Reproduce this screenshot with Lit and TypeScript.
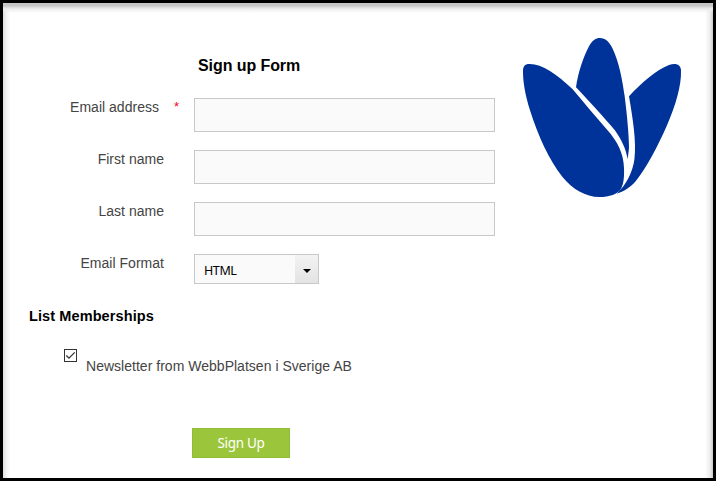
import { LitElement, html, css } from "lit";
import { customElement, property } from "lit/decorators.js";

@customElement("form-row")
class FormRow extends LitElement {
  @property() label = "";
  @property({ type: Boolean }) required = false;
  static styles = css`
    :host { display: flex; height: 52px; }
    .label { box-sizing: border-box; width: 191px; padding-right: 30px; display: flex; justify-content: flex-end; font-size: 14px; line-height: 18px; color: #444; white-space: nowrap; letter-spacing: 0.02px; }
    .star { color: #ff0018; font-size: 13px; width: 5px; margin-left: 15px; }
    .req { padding-right: 15px; }
  `;
  render() {
    return html`<div class="label ${this.required ? "req" : ""}">
        <span>${this.label}</span>${this.required ? html`<span class="star">*</span>` : ""}
      </div><slot></slot>`;
  }
}

@customElement("flower-logo")
class FlowerLogo extends LitElement {
  static styles = css`
    :host { display: block; width: 190px; height: 185px; }
    svg { display: block; width: 100%; height: 100%; fill: #003399; }
  `;
  render() {
    return html`<svg viewBox="0 0 570 555">
      <path d="M39 140C39 124 44 117 58 117C94 116 141 147 188 193C220 232 256 273 290 313C323 350 341 386 342 429C343 456 341 477 333 491C324 507 298 516 268 516C226 515 188 493 157 455C118 407 84 332 60 256C46 210 39 171 39 140Z"/>
      <path d="M198 187C204 145 219 98 237 64C247 46 257 39 270 39C286 39 298 51 308 71C327 111 337 164 344 214C351 268 357 333 357 370L353 403C348 371 334 343 314 315C282 277 237 229 198 187Z"/>
      <path d="M357 214C394 174 439 134 477 120C496 113 512 117 513 136C515 181 496 244 471 301C442 367 410 428 377 469C361 487 341 501 320 506C350 478 368 440 373 404C380 350 368 280 357 214Z"/>
    </svg>`;
  }
}

@customElement("app-root")
class AppRoot extends LitElement {
  static styles = css`
    :host { display: block; box-sizing: border-box; width: 716px; height: 481px; border: 3px solid #000; overflow: hidden; position: relative; font-family: "Liberation Sans", Arial, sans-serif; color: #444;
      background:
        linear-gradient(#c6c6c6 0 3px, #d9d9d9 4px, #eeeeee 6px, rgba(255,255,255,0) 10px) top / 100% 10px no-repeat,
        linear-gradient(90deg, #dedede, #f2f2f2 3px, #fff 7px) left / 7px 100% no-repeat,
        linear-gradient(270deg, #cacaca, #ededed 3px, #fff 8px) right / 8px 100% no-repeat,
        #fff; }
    flower-logo { position: absolute; left: 507px; top: 22px; }
    h1 { margin: 0; padding: 54px 0 0 195px; font-size: 16px; line-height: 18px; height: 23px; color: #000; white-space: nowrap; letter-spacing: -0.08px; }
    .input { box-sizing: border-box; width: 301px; height: 34px; border: 1px solid #c8c8c8; background: #fafafa; }
    .rows { padding-top: 18px; }
    .select { box-sizing: border-box; width: 125px; height: 30px; border: 1px solid #c8c8c8; background: #fafafa; display: flex; justify-content: space-between; font-family: "Noto Sans", sans-serif; font-size: 12.5px; letter-spacing: -0.4px; line-height: 31px; color: #000; padding-left: 9px; }
    .arrow { width: 23px; height: 28px; background: linear-gradient(#f3f3f3, #e3e3e3); display: flex; align-items: center; justify-content: center; }
    .arrow svg { width: 8px; height: 4px; margin-top: 4px; }
    h2 { margin: 1px 0 0; padding-left: 26px; font-size: 14.5px; letter-spacing: 0.1px; line-height: 18px; color: #000; white-space: nowrap; }
    .check { display: flex; padding: 24px 0 0 61px; gap: 9px; font-size: 14px; letter-spacing: 0.02px; line-height: 18px; white-space: nowrap; }
    .box { width: 13px; height: 13px; display: block; }
    .check span { margin-top: 8px; }
    .button { box-sizing: border-box; margin: 53px 0 0 189px; width: 98px; height: 30px; border: 1px solid #91bd35; background: #9bc63c; color: #fff; text-align: center; font-family: "Noto Sans", sans-serif; font-size: 13.5px; letter-spacing: -0.3px; line-height: 29px; }
  `;
  render() {
    return html`
      <h1>Sign up Form</h1>
      <div class="rows">
        <form-row label="Email address" required><div class="input"></div></form-row>
        <form-row label="First name"><div class="input"></div></form-row>
        <form-row label="Last name"><div class="input"></div></form-row>
        <form-row label="Email Format"><div class="select"><span>HTML</span><span class="arrow"><svg viewBox="0 0 8 4"><path d="M0 0H8L4 4Z"/></svg></span></div></form-row>
      </div>
      <h2>List Memberships</h2>
      <div class="check">
        <svg class="box" viewBox="0 0 13 13" fill="none" stroke="#333"><rect x=".5" y=".5" width="12" height="12"/><path d="M2.3 6.5L5 9.2L10.7 3.4" stroke-width="1.3"/></svg>
        <span>Newsletter from WebbPlatsen i Sverige AB</span>
      </div>
      <div class="button">Sign Up</div>
      <flower-logo></flower-logo>`;
  }
}
